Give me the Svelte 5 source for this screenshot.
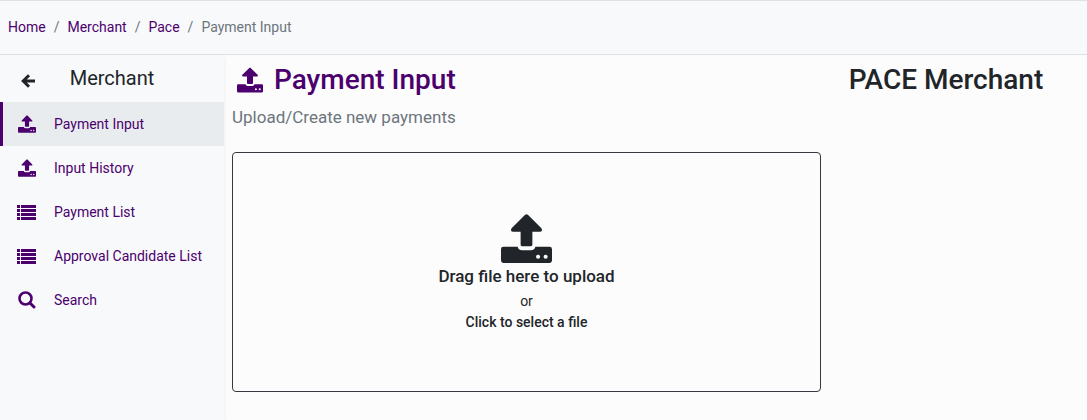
<script lang="ts">
	type Icon = 'upload' | 'list' | 'search';

	interface NavItem {
		label: string;
		icon: Icon;
		href: string;
	}

	const crumbs = ['Home', 'Merchant', 'Pace'];

	const items: NavItem[] = [
		{ label: 'Payment Input', icon: 'upload', href: '#payment-input' },
		{ label: 'Input History', icon: 'upload', href: '#input-history' },
		{ label: 'Payment List', icon: 'list', href: '#payment-list' },
		{ label: 'Approval Candidate List', icon: 'list', href: '#approval-candidates' },
		{ label: 'Search', icon: 'search', href: '#search' }
	];

	let active = $state('Payment Input');
	let fileInput: HTMLInputElement;
</script>

{#snippet uploadIcon(size: number)}
	<svg width={size} height={size} viewBox="0 0 52 50" fill="currentColor" aria-hidden="true">
		<path d="M24.6 .8Q26 -.5 27.4 .8L41.2 14.6Q43 18 39.6 18H32V31Q32 33 30 33H22Q20 33 20 31V18H12.4Q9 18 10.8 14.6Z" />
		<path fill-rule="evenodd" d="M2.5 33.5H17Q17.6 37 21.5 37H30.5Q34.4 37 35 33.5H49.5Q52 33.5 52 36V47.500Q52 50 49.500 50H2.500Q0 50 0 47.500V36Q0 33.500 2.500 33.500ZM37.800 41.500A2.100 2.100 0 1 0 37.800 45.700A2.100 2.100 0 1 0 37.800 41.500ZM45.500 41.500A2.100 2.100 0 1 0 45.500 45.700A2.100 2.100 0 1 0 45.500 41.500Z" />
	</svg>
{/snippet}

<nav class="breadcrumb" aria-label="Breadcrumb">
	<ol>
		{#each crumbs as crumb}
			<li><a href="#{crumb.toLowerCase()}">{crumb}</a></li>
		{/each}
		<li aria-current="page">Payment Input</li>
	</ol>
</nav>

<div class="layout">
	<aside class="sidebar">
		<div class="sidebar-header">
			<button class="back" aria-label="Back">
				<svg width="14" height="14" viewBox="0 0 14 14" fill="none" stroke="currentColor" stroke-width="3" aria-hidden="true">
					<path d="M8 1.2L2.200 7L8 12.800M2.500 7H14" />
				</svg>
			</button>
			<h2>Merchant</h2>
		</div>
		<nav aria-label="Merchant">
			{#each items as item}
				<a
					class="nav-item"
					class:active={item.label === active}
					href={item.href}
					onclick={() => (active = item.label)}
				>
					<span class="nav-icon">
						{#if item.icon === 'upload'}
							{@render uploadIcon(18)}
						{:else if item.icon === 'list'}
							<svg width="19" height="15" viewBox="0 0 19 15" fill="currentColor" aria-hidden="true">
								<path d="M0 0h3v3H0zM0 4h3v3H0zM0 8h3v3H0zM0 12h3v3H0zM4 0h15v3H4zM4 4h15v3H4zM4 8h15v3H4zM4 12h15v3H4z" />
							</svg>
						{:else}
							<svg width="18" height="18" viewBox="0 0 18 18" fill="none" stroke="currentColor" stroke-width="2.6" aria-hidden="true">
								<circle cx="7.5" cy="7.5" r="6" />
								<path d="M12 12L16 16" stroke-width="3" stroke-linecap="round" />
							</svg>
						{/if}
					</span>
					{item.label}
				</a>
			{/each}
		</nav>
	</aside>

	<main>
		<section class="content">
			<h1 class="title">
				{@render uploadIcon(26)}
				Payment Input
			</h1>
			<p class="subtitle">Upload/Create new payments</p>
			<button class="dropzone" onclick={() => fileInput.click()}>
				{@render uploadIcon(51)}
				<span class="drop-title">Drag file here to upload</span>
				<span>or</span>
				<strong>Click to select a file</strong>
			</button>
			<input type="file" hidden bind:this={fileInput} aria-label="Payment file" />
		</section>
		<h1 class="merchant">PACE Merchant</h1>
	</main>
</div>

<style>
	:global(body) {
		background: #fcfcfc;
		color: #212529;
		font-family: Roboto, sans-serif;
		font-size: 14px;
		line-height: 22px;
	}

	:global(#app) {
		display: flex;
		flex-direction: column;
		min-height: 100vh;
	}

	a {
		color: #4b006e;
		text-decoration: none;
	}

	h1,
	h2,
	p {
		margin: 0;
	}

	svg {
		display: block;
	}

	.breadcrumb {
		padding: 15px 8px 16px;
		background: #f8f9fa;
		border-top: 1px solid #dee2e6;
		border-bottom: 1px solid #dee2e6;
	}

	.breadcrumb ol {
		display: flex;
		margin: 0;
		padding: 0;
		list-style: none;
		color: #6c757d;
	}

	.breadcrumb li + li::before {
		content: '/';
		padding: 0 8px;
		color: #6c757d;
	}

	.layout {
		flex: 1;
		display: flex;
	}

	.sidebar {
		flex: 0 0 224px;
		background: #f8f9fa;
		box-shadow: 0 2px 4px rgba(0, 0, 0, 0.075);
		clip-path: inset(0 -6px 0 0);
	}

	.sidebar-header {
		display: flex;
		align-items: center;
		padding: 12px 56px 13px 0;
	}

	.back {
		display: flex;
		padding: 5px 21px 0;
		border: none;
		background: none;
		color: inherit;
		cursor: pointer;
	}

	.sidebar-header h2 {
		flex: 1;
		font-size: 20px;
		font-weight: 400;
		text-align: center;
	}

	nav {
		display: block;
	}

	.nav-item {
		display: flex;
		align-items: center;
		padding: 11px 0;
		border-left: 3px solid transparent;
	}

	.nav-item.active {
		background: #e9ecef;
		border-left-color: #4b006e;
	}

	.nav-icon {
		display: flex;
		justify-content: center;
		width: 47px;
		margin-right: 4px;
	}

	main {
		flex: 1;
		display: flex;
		padding: 8px;
	}

	.content {
		flex: 0 1 589px;
	}

	.title,
	.merchant {
		font-size: 28px;
		font-weight: 500;
		line-height: 34px;
	}

	.title {
		display: flex;
		align-items: center;
		gap: 11px;
		padding-left: 5px;
		color: #4b006e;
	}

	.merchant {
		flex: 1;
		padding-right: 8px;
		text-align: center;
	}

	.subtitle {
		margin: 9px 0 24px;
		font-size: 17px;
		color: #6c757d;
	}

	.dropzone {
		display: flex;
		flex-direction: column;
		align-items: center;
		width: 100%;
		padding: 60px 16px 58px;
		border: 1px solid #343a40;
		border-radius: 4px;
		background: none;
		color: inherit;
		font: inherit;
		line-height: 21px;
		cursor: pointer;
	}

	.drop-title {
		margin: 2px 0 4px;
		font-size: 17px;
		font-weight: 500;
	}

	.dropzone strong {
		font-weight: 500;
	}
</style>
